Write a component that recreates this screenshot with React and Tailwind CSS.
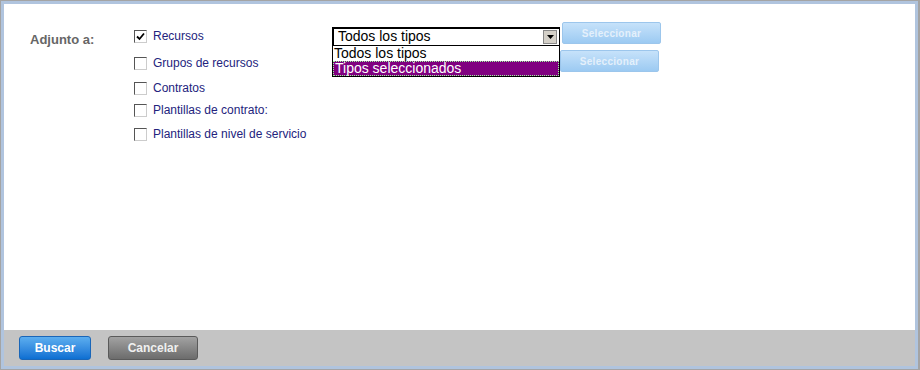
import { useState } from "react";

const tipos = ["Todos los tipos", "Tipos seleccionados"];

function Check({ checked, label }) {
  return (
    <label className="flex items-center gap-[6px] text-[12px] text-[#23237d]">
      <span className="flex h-[13px] w-[13px] items-center justify-center border border-t-[#555] border-l-[#555] border-r-[#ccc] border-b-[#ccc] bg-white">
        {checked && (
          <svg width="9" height="9" viewBox="0 0 9 9">
            <path d="M1 4.5 L3.5 7 L8 1.5" fill="none" stroke="#000" strokeWidth="1.8" />
          </svg>
        )}
      </span>
      {label}
    </label>
  );
}

function SelectButton({ className }) {
  return (
    <button
      className={
        "h-[22px] w-[99px] rounded-[2px] border border-[#9cc6ec] bg-gradient-to-b from-[#c6e2fa] to-[#9ccaf2] text-[10px] font-bold tracking-[0.3px] text-[#e4f0fb] " +
        className
      }
    >
      Seleccionar
    </button>
  );
}

export default function App() {
  const [tipo] = useState(tipos[0]);

  return (
    <div className="h-[370px] w-[920px] border border-r-2 border-[#a4a4a4] bg-[#b0c4de] p-[3px] font-['Liberation_Sans',Arial,sans-serif]">
      <div className="flex h-full flex-col">
        <div className="flex-1 bg-white pl-[26px] pt-[20px]">
          <div className="flex">
            <div className="w-[104px] pt-[6px] text-[13px] font-bold text-[#666]">
              Adjunto a:
            </div>
            <div className="flex flex-col">
              <div className="flex h-[24px] items-center">
                <div className="w-[198px]">
                  <Check checked label="Recursos" />
                </div>
                <div className="relative mr-[2px] flex h-[19px] w-[228px] items-center border border-t-2 border-l-2 border-black bg-white pl-[4px] text-[14px] text-black">
                  {tipo}
                  <span className="absolute right-[2px] top-[1px] flex h-[14px] w-[14px] items-center justify-center border border-[#888] bg-[#d4d0c8]">
                    <svg width="7" height="4" viewBox="0 0 7 4">
                      <path d="M0 0 H7 L3.5 4 Z" fill="#000" />
                    </svg>
                  </span>
                  <div className="absolute left-[-2px] top-full z-10 w-[228px] border border-black bg-white text-[14px] leading-[15px]">
                    <div className="pl-[1px] text-black">{tipos[0]}</div>
                    <div className="border border-dotted border-[#9f9] bg-[#800080] pl-[1px] leading-[13px] text-white">
                      {tipos[1]}
                    </div>
                  </div>
                </div>
                <SelectButton className="mb-[6px]" />
              </div>
              <div className="flex h-[30px] items-center">
                <div className="w-[426px]">
                  <Check label="Grupos de recursos" />
                </div>
                <SelectButton className="mb-[4px]" />
              </div>
              <div className="flex h-[20px] items-center">
                <Check label="Contratos" />
              </div>
              <div className="flex h-[24px] items-center">
                <Check label="Plantillas de contrato:" />
              </div>
              <div className="flex h-[24px] items-center">
                <Check label="Plantillas de nivel de servicio" />
              </div>
            </div>
          </div>
        </div>
        <div className="flex h-[36px] items-center gap-[17px] bg-[#c4c4c4] pl-[15px]">
          <button className="h-[24px] w-[72px] rounded-[3px] border border-[#1a66b8] bg-gradient-to-b from-[#5caeef] to-[#0b6fd2] text-[12px] font-bold text-white">
            Buscar
          </button>
          <button className="h-[24px] w-[90px] rounded-[3px] border border-[#5a5a5a] bg-gradient-to-b from-[#a2a2a2] to-[#6c6c6c] text-[12px] font-bold text-[#f0f0f0]">
            Cancelar
          </button>
        </div>
      </div>
    </div>
  );
}
